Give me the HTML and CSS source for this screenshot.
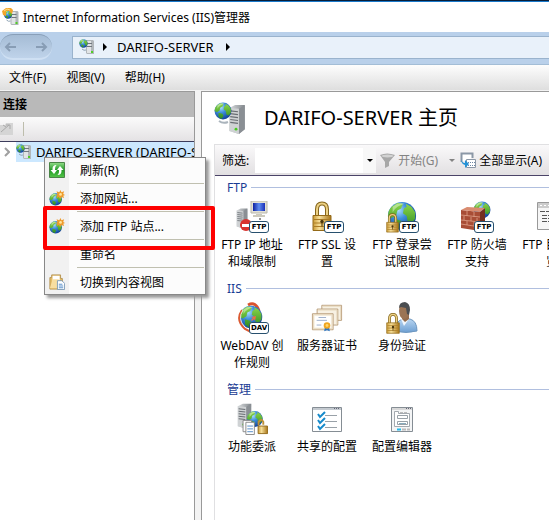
FILE: index.html
```html
<!DOCTYPE html>
<html lang="zh-CN">
<head>
<meta charset="utf-8">
<title>Internet Information Services (IIS)管理器</title>
<link rel="stylesheet" href="styles.css">
</head>
<body>
<svg class="sprite" aria-hidden="true">
  <defs>
    <radialGradient id="sea" cx=".38" cy=".3" r=".75"><stop offset="0" stop-color="#a9dcfb"/><stop offset=".4" stop-color="#3f8fdc"/><stop offset="1" stop-color="#0c3a94"/></radialGradient>
    <linearGradient id="land" x2="0" y2="1"><stop offset="0" stop-color="#8fd84a"/><stop offset="1" stop-color="#2c8a22"/></linearGradient>
    <linearGradient id="metal"><stop offset="0" stop-color="#d9dcde"/><stop offset="1" stop-color="#84898e"/></linearGradient>
    <linearGradient id="brass"><stop offset="0" stop-color="#c99a35"/><stop offset=".35" stop-color="#f7e09a"/><stop offset="1" stop-color="#a87518"/></linearGradient>
    <linearGradient id="green" x2="0" y2="1"><stop offset="0" stop-color="#93dd8a"/><stop offset=".5" stop-color="#219a25"/><stop offset="1" stop-color="#55c64a"/></linearGradient>
    <linearGradient id="shirt" x2="0" y2="1"><stop offset="0" stop-color="#b9d6f2"/><stop offset="1" stop-color="#6d9fd2"/></linearGradient>
    <linearGradient id="screen"><stop offset="0" stop-color="#0d1fa0"/><stop offset=".5" stop-color="#5f8df0"/><stop offset="1" stop-color="#1a2fb8"/></linearGradient>
    <symbol id="globe" viewBox="0 0 32 32">
      <circle cx="16" cy="16" r="15" fill="url(#sea)"/>
      <path d="M5 6 11 2l6 1-2 5-4 2-1 5-5 3-4-2Q1 10 5 6zM20 3l6 3 4 6 0 7-4 5-4-2-1-6-4-3 1-5 3-2zM8 19l7 2 2 4-4 5-5-4z" fill="url(#land)"/>
      <path d="M6 6q6-5 13-3-9 2-13 9z" fill="#fff" opacity=".4"/>
    </symbol>
    <symbol id="tower" viewBox="0 0 18 30">
      <path d="M1 3 7 0h10v25l-6 5L1 27z" fill="url(#metal)"/>
      <path d="M11 4 17 0v25l-6 5z" fill="#8a8f94"/>
      <path d="M1 3 11 4v26L1 27z" fill="#cfd2d4"/>
      <path d="M2 6l8 1M2 9l8 1M2 12l8 1M2 15l8 1M2 18l8 1" stroke="#696e73" stroke-width="1.2"/>
      <circle cx="8" cy="25" r="1.5" fill="#47cb20"/>
    </symbol>
    <symbol id="server" viewBox="0 0 32 32">
      <use href="#tower" x="14" y="3" width="18" height="29"/>
      <use href="#globe" x="0" y="0" width="18" height="18"/>
      <path d="M5 19q4 3 9 1" fill="none" stroke="#aab4bc" stroke-width="2"/>
    </symbol>
    <symbol id="server-small" viewBox="0 0 16 16">
      <path d="M7 1h7l1 1v13H8L7 14z" fill="#b1b6ba"/>
      <path d="M8 2h4v12H8z" fill="#e1e4e6"/>
      <path d="M8 4.500h5M8 7.500h5" stroke="#70777d"/>
      <path d="M12 12h2v2h-2z" fill="#50cf25"/>
      <use href="#globe" x="0" y="0" width="9" height="9"/>
      <path d="M3 10q2 2 4 1" fill="none" stroke="#91a5b6"/>
    </symbol>
    <symbol id="app" viewBox="0 0 18 18">
      <use href="#server-small" x="1" y="2" width="17" height="16"/>
      <path d="M0 3 4 0h5l2 2-1 4-3-3H4v5L1 7z" fill="#f3a52b"/>
      <path d="M2 3l3-2 3 1" stroke="#fbe08a" fill="none"/>
    </symbol>
    <symbol id="globe-new" viewBox="0 0 18 18">
      <use href="#globe" x="0" y="3" width="15" height="15"/>
      <path d="m13 0 1 2.500 3-1-1 3 2 1-2 1 1 2.500-3-1-1.500 2-1.500-2-2.500 1 1-2.500-2-1 2-1-1-3 3 1z" fill="#ee9a2a"/>
      <circle cx="13" cy="5" r="1.500" fill="#ffe59a"/>
    </symbol>
    <symbol id="lock" viewBox="0 0 20 30">
      <path d="M5 15V8q0-6 5-6t5 6v7" fill="none" stroke="#84651c" stroke-width="4"/>
      <path d="M5 15V8q0-6 5-6t5 6v7" fill="none" stroke="#ecd083" stroke-width="2"/>
      <path d="M1 14h18v15H1z" fill="url(#brass)" stroke="#946a18"/>
      <path d="M2 18h16M2 21.500h16M2 25h16" stroke="#ab7c25"/>
      <circle cx="10" cy="20" r="1.700" fill="#4d380e"/><path d="M9.500 20h1v5h-1z" fill="#4d380e"/>
    </symbol>
    <symbol id="refresh" viewBox="0 0 16 16">
      <path d="M.5.5h15v15H.5z" fill="url(#green)" stroke="#4a8547"/>
      <path d="M7.500 3Q3 3 3.500 8H1.500L5 12l3-4H6q-.5-3 1.500-5zM8.500 13q4.500 0 4-5h2L11 4 8 8h2q.5 3-1.500 5z" fill="#fff"/>
    </symbol>
    <symbol id="content" viewBox="0 0 18 18">
      <path d="M1 4h2V1h10v4h2v12H1z" fill="#e5bc65" stroke="#b3924f"/>
      <path d="M4 2h8v9H4z" fill="#fff"/><path d="M1 16 4 6h7v10z" fill="#f8dea0"/>
      <path d="M9.500 7.500h5l3 3v7h-8z" fill="#fff" stroke="#7897b5"/>
      <path d="M11 11.500h4M11 13.500h5M11 15.500h5" stroke="#4b86c5"/>
    </symbol>
    <symbol id="ip" viewBox="0 0 32 32">
      <use href="#tower" x="0" y="6" width="12" height="23"/>
      <path d="M15 0h16v12H15z" fill="#e2e0d4" stroke="#b9b7aa"/><path d="M17 2h12v8H17z" fill="url(#screen)"/>
      <path d="M20 13h6v1h3v2H17v-2h3z" fill="#cdcabc"/>
      <path d="M24 17v5" stroke="#222" stroke-dasharray="2 1"/>
      <circle cx="10" cy="24" r="6" fill="#d8332e"/><path d="M6 23h8v3H6z" fill="#fff"/>
    </symbol>
    <symbol id="ssl" viewBox="0 0 32 32"><use href="#lock" x="1" y="0" width="20" height="31"/></symbol>
    <symbol id="login" viewBox="0 0 32 32">
      <use href="#globe" x="1" y="0" width="30" height="30"/><use href="#lock" x="0" y="12" width="13" height="20"/>
    </symbol>
    <symbol id="firewall" viewBox="0 0 32 32">
      <use href="#globe" x="12" y="0" width="18" height="18"/>
      <path d="m0 9 19 2v19L0 27z" fill="#a84d36"/><path d="m19 11 5-4v19l-5 4z" fill="#74301f"/><path d="m0 9 6-3 18 1-5 4z" fill="#d98c70"/>
      <path d="m0 14 19 2m-19 3 19 2M0 23l19 3M6 10v5m7-4v5M3 15v4m7-3v4m6-3v4M6 20v4m7-3v4" stroke="#e0a28b" stroke-width=".8"/>
    </symbol>
    <symbol id="browse" viewBox="0 0 32 32">
      <path d="M1.500 1.500h30v24l-4 3h-26z" fill="#f6f6f6" stroke="#999"/><path d="M2 2h29v5H2z" fill="#ccc"/>
      <path d="M4 4.500h22" stroke="#fff" stroke-dasharray="2 2"/>
      <path d="M4 10.500h25M6 14.500h8m3 0h9M6 17.500h8m3 0h9M6 20.500h8m3 0h9" stroke="#555" stroke-dasharray="5 1"/>
    </symbol>
    <symbol id="webdav" viewBox="0 0 32 32">
      <path d="M12 3Q20-1 23 9" fill="none" stroke="#d9532e" stroke-width="3"/>
      <use href="#globe" x="3" y="3" width="24" height="24"/>
      <path d="M6 8q-7 10 3 19l6 3" fill="none" stroke="#db5a32" stroke-width="2"/><path d="M7 8q-6 9 2 17" fill="none" stroke="#fff" opacity=".8"/>
      <path d="M15 18l2-2-2-1 5-1-1 5-1-2-2 2z" fill="#ee7040"/>
    </symbol>
    <symbol id="certs" viewBox="0 0 34 32">
      <g fill="#f7f1e3" stroke="#b79c79"><path d="M11.500 2.500h21v16h-21z"/><path d="M6.500 6.500h22v17h-22z"/><path d="M1.500 11.500h22v17h-22z"/></g>
      <g fill="none" stroke="#e5d6bc"><path d="M12.500 3.500h19v14M7.500 7.500h20v15M2.500 12.500h20v15h-20z"/></g>
      <path d="M4 14h17v12H4z" fill="#fff"/><path d="M8 15.500h8M6 18.500h11M6 23.500h5" stroke="#9bacc9"/>
      <path d="m15 25-1 5 3-1 3 1-1-5z" fill="#2c75c4"/><circle cx="17" cy="24" r="3.500" fill="#f0a51f"/><circle cx="17" cy="24" r="1.500" fill="#ffd66a"/>
    </symbol>
    <symbol id="auth" viewBox="0 0 32 32">
      <path d="M9 29q0-10 8-12h7q7 2 7 12-11 3-22 0z" fill="url(#shirt)" stroke="#6f98c0"/>
      <path d="m15 17 3 7 5-7z" fill="#f0f6fc"/><path d="M16 11h7v6l-4 3-3-3z" fill="#946c4c"/>
      <ellipse cx="18" cy="9" rx="5" ry="8" fill="#9b7454"/><path d="M13 6q0-6 6-6 5 1 5 8l-1 5-2-1-1-6-5-1z" fill="#4a4d50"/>
      <use href="#lock" x="0" y="11" width="14" height="21"/>
    </symbol>
    <symbol id="delegate" viewBox="0 0 34 34">
      <use href="#tower" x="1" y="0" width="16" height="28"/>
      <use href="#globe" x="11" y="8" width="18" height="18"/>
      <path d="M7.500 18.500h9v12h-9z" fill="#fff" stroke="#888"/><path d="M10.500 20.500h9v13h-9z" fill="#fff" stroke="#888"/>
      <path d="M12 24.500h6M12 27.500h6M12 30.500h6" stroke="#4f88c5"/>
      <path d="M24 24v-4q3-4 5 0v3" fill="none" stroke="#bd8f35" stroke-width="2"/><path d="M23.500 24.500h10v8h-10z" fill="url(#brass)" stroke="#936b1b"/>
    </symbol>
    <symbol id="shared" viewBox="0 0 32 32">
      <path d="M1.500 4.500h29v24h-29z" fill="#fff" stroke="#858d94"/><path d="M2 5h28v2H2z" fill="#c4cad0"/><path d="M23 5.500h6" stroke="#667" stroke-dasharray="1 1"/>
      <path d="M14 12.500h12M14 18.500h12M14 24.500h12" stroke="#99a1a8"/>
      <path d="m7 11 2 3 5-5M7 17l2 3 5-5M7 23l2 3 5-5" fill="none" stroke="#168acb" stroke-width="2"/>
    </symbol>
    <symbol id="editor" viewBox="0 0 32 32">
      <path d="M5.500 4.500h21v24h-21z" fill="#f4f5f6" stroke="#858d94"/><path d="M6 6h20" stroke="#bbb"/><path d="M20 5.500h5" stroke="#667" stroke-dasharray="1 1"/>
      <path d="M8.500 8.500h4v2h11v13h-15z" fill="#fff" stroke="#a3a9af"/><path d="M14 9.500h3m1 0h3" stroke="#bbb"/>
      <path d="M11.500 12.500h10v3h-10zM11.500 18.500h10v3h-10z" fill="#fff" stroke="#99a1a8"/><path d="M13 20.500h7" stroke="#8ab"/>
      <path d="M11 26.500h4" stroke="#23b8e8" stroke-width="2"/><path d="M16 26.500h4m1 0h3" stroke="#bbb" stroke-width="2"/>
    </symbol>
  </defs>
</svg>

<div class="window">
  <header class="titlebar">
    <svg class="i18"><use href="#app"/></svg>
    <span>Internet Information Services (IIS)管理器</span>
  </header>

  <nav class="navbar">
    <div class="history">
      <button type="button" aria-label="后退"><svg viewBox="0 0 12 10"><path d="M12 5H2m4-4L2 5l4 4"/></svg></button>
      <button type="button" aria-label="前进"><svg viewBox="0 0 12 10"><path d="M0 5h10M6 1l4 4-4 4"/></svg></button>
    </div>
    <div class="address">
      <svg class="i16"><use href="#server-small"/></svg>
      <i class="arrow"></i>
      <a href="#">DARIFO-SERVER</a>
      <i class="arrow"></i>
    </div>
  </nav>

  <div class="menubar">
    <button type="button">文件(F)</button>
    <button type="button">视图(V)</button>
    <button type="button">帮助(H)</button>
  </div>

  <div class="panes">
    <aside class="connections">
      <h2>连接</h2>
      <div class="tools">
        <button type="button" aria-label="连接到"><svg viewBox="0 0 14 14"><path d="M0 3h5l1-2h7v12H0z" fill="#d5d5d5"/><path d="M1 10 9 3m-3 0h4v4M3 3l3 2" fill="none" stroke="#a9a9a9"/></svg></button>
        <i class="divider"></i>
      </div>
      <div class="tree">
        <svg class="chevron" viewBox="0 0 6 10"><path d="m1 1 4 4-4 4"/></svg>
        <div class="node">
          <i class="dots"></i>
          <svg class="i16"><use href="#server-small"/></svg>
          <span>DARIFO-SERVER (DARIFO-S</span>
        </div>
      </div>
    </aside>

    <main class="home">
      <h1><svg class="i32"><use href="#server"/></svg>DARIFO-SERVER 主页</h1>
      <div class="features">
        <div class="filter">
          <label for="filter">筛选:</label>
          <div class="combo"><input id="filter" type="text"><button type="button" aria-label="展开"><i class="caret"></i></button></div>
          <button type="button" class="go" disabled>
            <svg class="i15" viewBox="0 0 15 15"><path d="M0 2q7-3 15 0L9 9v4l-4 2V9z" fill="#a7a7a7"/><ellipse cx="7.500" cy="3" rx="6" ry="1.500" fill="#d2d2d2"/></svg>
            开始(G)<i class="caret"></i>
          </button>
          <button type="button" class="all">
            <svg class="i16" viewBox="0 0 16 16"><path d="M1.500 10V1.500h11V6" fill="#fff" stroke="#8b97a6" stroke-width="2"/><path d="M6.500 7.500h9v8h-9z" fill="#fff" stroke="#8b97a6"/><path d="M8 10.500h7M8 13.500h7" stroke="#6d86a5" stroke-dasharray="1 1"/><path d="M1 7q1 4 4 4V8l4 4-4 4v-3Q1 12 1 7z" fill="#2492d6"/></svg>
            全部显示(A)
          </button>
        </div>

        <section class="group">
          <h3>FTP</h3>
          <div class="items">
            <a href="#"><span class="icon"><svg><use href="#ip"/></svg><b>FTP</b></span>FTP IP 地址<br>和域限制</a>
            <a href="#"><span class="icon"><svg><use href="#ssl"/></svg><b>FTP</b></span>FTP SSL 设<br>置</a>
            <a href="#"><span class="icon"><svg><use href="#login"/></svg><b>FTP</b></span>FTP 登录尝<br>试限制</a>
            <a href="#"><span class="icon"><svg><use href="#firewall"/></svg><b>FTP</b></span>FTP 防火墙<br>支持</a>
            <a href="#"><span class="icon"><svg><use href="#browse"/></svg><b>FTP</b></span>FTP 目录浏<br>览</a>
          </div>
        </section>
        <section class="group">
          <h3>IIS</h3>
          <div class="items">
            <a href="#"><span class="icon"><svg><use href="#webdav"/></svg><b>DAV</b></span>WebDAV 创<br>作规则</a>
            <a href="#"><span class="icon"><svg><use href="#certs"/></svg></span>服务器证书</a>
            <a href="#"><span class="icon"><svg><use href="#auth"/></svg></span>身份验证</a>
          </div>
        </section>
        <section class="group">
          <h3>管理</h3>
          <div class="items">
            <a href="#"><span class="icon"><svg><use href="#delegate"/></svg></span>功能委派</a>
            <a href="#"><span class="icon"><svg><use href="#shared"/></svg></span>共享的配置</a>
            <a href="#"><span class="icon"><svg><use href="#editor"/></svg></span>配置编辑器</a>
          </div>
        </section>
      </div>
    </main>
  </div>
</div>

<div class="context" role="menu">
  <button type="button" role="menuitem"><svg class="i16"><use href="#refresh"/></svg><span>刷新(R)</span></button>
  <hr>
  <button type="button" role="menuitem"><svg class="i16"><use href="#globe-new"/></svg><span>添加网站...</span></button>
  <hr>
  <button type="button" role="menuitem"><svg class="i16"><use href="#globe-new"/></svg><span>添加 FTP 站点...</span></button>
  <hr>
  <button type="button" role="menuitem"><i class="i16"></i><span>重命名</span></button>
  <hr>
  <button type="button" role="menuitem"><svg class="i16"><use href="#content"/></svg><span>切换到内容视图</span></button>
</div>
<div class="highlight"></div>
</body>
</html>
```
FILE: styles.css
```css
* { box-sizing: border-box; }

body {
  margin: 0;
  font: 12px/17px "Noto Sans", "Noto Sans CJK SC", sans-serif;
  color: #000;
  overflow: hidden;
}

button, input {
  font: inherit;
  color: inherit;
  border: 0;
  padding: 0;
  background: none;
  white-space: nowrap;
}

a { color: inherit; text-decoration: none; }
h1, h2, h3 { margin: 0; font-size: 12px; font-weight: 400; }
svg { display: block; flex: none; }

.sprite { position: absolute; width: 0; height: 0; }
.i15 { width: 15px; height: 15px; }
.i16 { width: 16px; height: 16px; flex: none; }
.i18 { width: 18px; height: 18px; }
.i32 { width: 32px; height: 32px; }

.window {
  display: flex;
  flex-direction: column;
  height: 100vh;
  border-top: 1px solid #071d38;
  background: #f3f3f3;
}

.titlebar {
  display: flex;
  align-items: center;
  gap: 3px;
  height: 31px;
  padding-left: 2px;
  border-top: 1px solid #1979ca;
  background: #fff;
}

.navbar {
  display: flex;
  align-items: center;
  gap: 20px;
  height: 33px;
  padding-bottom: 2px;
  border-bottom: 1px solid #a3bdd6;
  background: #b9d0ea;
}

.history {
  display: flex;
  justify-content: space-between;
  width: 52px;
  height: 26px;
  padding: 0 4px;
  border-top: 1px solid #899fb8;
  border-bottom: 2px solid #cfe0f3;
  border-radius: 13px;
  background: linear-gradient(#a5bcd5, #bfd3ea);
}

.history svg {
  width: 12px;
  height: 10px;
  fill: none;
  stroke: #889db5;
  stroke-width: 2;
}

.address {
  display: flex;
  flex: 1;
  align-items: center;
  gap: 8px;
  height: 23px;
  padding-left: 6px;
  border: 1px solid #9ab3cd;
  border-right: 0;
  background: #e9f1fa;
  font-size: 13px;
}

.arrow {
  width: 4px;
  border: 4px solid transparent;
  border-left-color: #000;
  border-right: 0;
}

.address a { margin: 0 4px 0 2px; }

.menubar {
  display: flex;
  align-items: center;
  gap: 20px;
  height: 25px;
  padding-left: 9px;
  background: linear-gradient(#fdfdfd, #dedede);
}

.panes {
  display: grid;
  flex: 1;
  grid-template-columns: 195px minmax(0, 1fr);
  gap: 6px;
  min-height: 0;
  padding-top: 1px;
}

.connections {
  overflow: hidden;
  border: solid #999;
  border-width: 1px 1px 0 0;
  background: #fff;
}

.connections h2 {
  height: 25px;
  padding: 4px 3px;
  font-weight: 700;
  background: #b9b9b9;
}

.tools {
  display: flex;
  align-items: center;
  gap: 9px;
  height: 25px;
  border-bottom: 1px solid #3c3c5c;
  background: linear-gradient(#fbfbfb, #e4e2e4);
}

.tools svg { width: 14px; height: 14px; }
.divider { width: 1px; height: 14px; background: #bdbdac; }

.tree { display: flex; align-items: center; }

.chevron {
  width: 6px;
  height: 10px;
  margin: 0 6px 0 4px;
  fill: none;
  stroke: #a0a0a0;
  stroke-width: 2;
}

.node {
  display: flex;
  flex: 1;
  align-items: center;
  height: 20px;
  min-width: 0;
  overflow: hidden;
  white-space: nowrap;
  background: #cce8ff;
  font-size: 13px;
}

.node span { margin-left: 4px; }
.dots { width: 3px; border-top: 1px dotted #777; }

.home {
  display: flex;
  flex-direction: column;
  overflow: hidden;
  border: solid #999;
  border-width: 1px 0 0 1px;
  background: #fff;
}

.home h1 {
  display: flex;
  align-items: center;
  gap: 18px;
  height: 52px;
  padding-left: 12px;
  font-size: 20px;
  line-height: 26px;
  white-space: nowrap;
}

.features {
  flex: 1;
  margin-left: 12px;
  border: solid #e0e0e2;
  border-width: 1px 0 0 1px;
}

.filter {
  display: flex;
  align-items: center;
  height: 31px;
  padding-left: 7px;
  border-bottom: 1px solid #4b4468;
  background: linear-gradient(#faf9fa, #e2e0e2);
  white-space: nowrap;
}

.combo {
  display: flex;
  flex: none;
  width: 121px;
  height: 25px;
  margin: 0 4px 0 6px;
  background: #fff;
}

.combo input { flex: 1; min-width: 0; padding: 0 4px; }
.combo button { display: grid; place-items: center; width: 13px; background: #f8f8f8; }

.caret {
  width: 6px;
  height: 3px;
  border: 3px solid transparent;
  border-top-color: currentColor;
  border-bottom: 0;
}

.go, .all { display: flex; flex: none; align-items: center; gap: 3px; }
.go { margin-right: 5px; color: #838383; }
.go .caret { margin-left: 8px; }

.group { height: 101px; }

.group h3 {
  display: flex;
  align-items: center;
  gap: 4px;
  height: 22px;
  margin-bottom: 3px;
  padding-left: 12px;
  color: #1a3c94;
}

.group h3::after { content: ""; flex: 1; height: 1px; background: #b0bfdf; }

.items { display: flex; }

.items a {
  flex: none;
  width: 74px;
  margin-right: 1px;
  text-align: center;
  white-space: nowrap;
}

.icon {
  position: relative;
  display: block;
  width: 32px;
  height: 32px;
  margin: 0 auto 3px;
}

.icon svg { width: 32px; height: 32px; }

.icon b {
  position: absolute;
  right: -1px;
  bottom: 0;
  width: 20px;
  height: 12px;
  border: 1px solid #27506e;
  border-radius: 3px;
  background: #fff;
  font: 700 7px/10px "DejaVu Sans", sans-serif;
  text-align: center;
}

.context {
  position: absolute;
  top: 157px;
  left: 44px;
  width: 162px;
  border: 1px solid #888;
  background: linear-gradient(90deg, #f1f1f1 24px, #fcfcfc 24px);
  box-shadow: 3px 3px 3px #999;
}

.context button {
  display: flex;
  align-items: center;
  gap: 15px;
  width: 100%;
  height: 24px;
  padding-left: 4px;
}

.context hr {
  height: 1px;
  margin: 1px 1px 2px 32px;
  border: 0;
  background: #c0c0b0;
}

.highlight {
  position: absolute;
  top: 206px;
  left: 43px;
  width: 172px;
  height: 44px;
  border: 4px solid #fe0000;
  border-radius: 2px;
  pointer-events: none;
}
```
